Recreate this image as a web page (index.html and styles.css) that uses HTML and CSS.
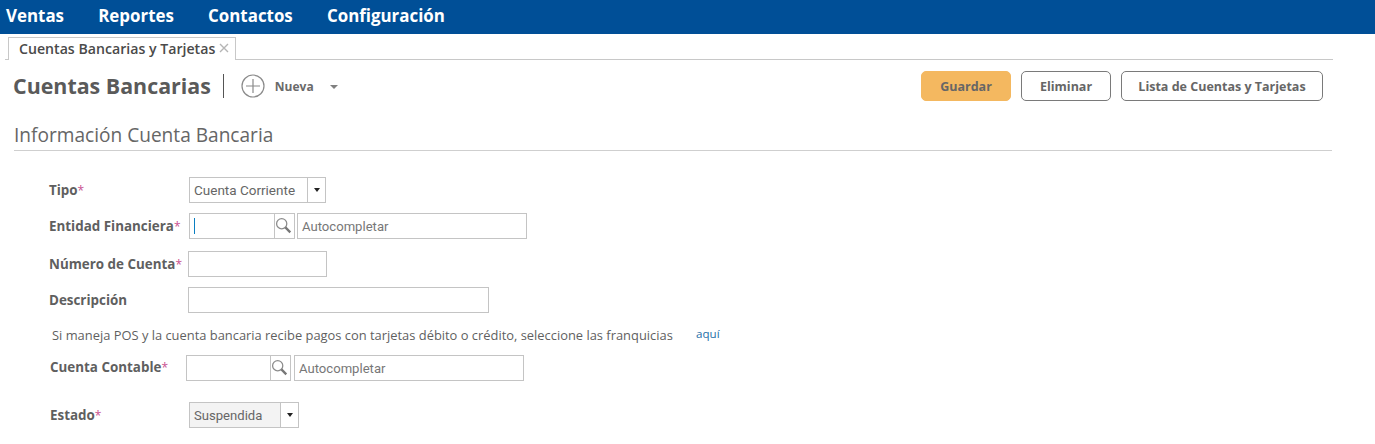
FILE: index.html
```html
<!DOCTYPE html>
<html lang="es">
<head>
<meta charset="utf-8">
<title>Cuentas Bancarias</title>
<link rel="stylesheet" href="styles.css">
</head>
<body>
<nav class="nav">
  <a class="nav-item">Ventas</a>
  <a class="nav-item">Reportes</a>
  <a class="nav-item">Contactos</a>
  <a class="nav-item">Configuración</a>
</nav>
<div class="tabs">
  <div class="tab"><span>Cuentas Bancarias y Tarjetas</span>
    <svg class="tab-x" width="10" height="10" viewBox="0 0 10 10"><path d="M1 1l8 8M9 1l-8 8" stroke="#b5b5b5" stroke-width="1.4" fill="none"/></svg>
  </div>
</div>
<header class="head">
  <h1 class="title">Cuentas Bancarias</h1>
  <div class="new">
    <svg class="plus" width="24" height="24" viewBox="0 0 24 24"><circle cx="12" cy="12" r="11" fill="none" stroke="#8a8a8a" stroke-width="1.2"/><path d="M12 5v14M5 12h14" stroke="#8a8a8a" stroke-width="1.2" fill="none"/></svg>
    <span class="new-label">Nueva</span>
    <span class="new-caret"></span>
  </div>
  <div class="actions">
    <button class="btn btn-primary">Guardar</button>
    <button class="btn">Eliminar</button>
    <button class="btn btn-wide">Lista de Cuentas y Tarjetas</button>
  </div>
</header>
<h2 class="section">Información Cuenta Bancaria</h2>
<form class="form">
  <div class="row row-tipo">
    <label class="lbl lbl-a">Tipo<em>*</em></label>
    <div class="select sel-tipo"><span class="sel-val">Cuenta Corriente</span><span class="sel-btn"><i></i></span></div>
  </div>
  <div class="row row-ent">
    <label class="lbl lbl-a">Entidad Financiera<em>*</em></label>
    <div class="lookup"><span class="lk-input"><span class="cursor"></span></span><span class="lk-btn"><svg width="17" height="17" viewBox="0 0 16 16"><circle cx="6.3" cy="6.3" r="4.8" fill="none" stroke="#8c8c8c" stroke-width="1.2"/><path d="M9.8 9.8l4.6 4.6" stroke="#777" stroke-width="2.2" fill="none"/></svg></span></div>
    <div class="auto">Autocompletar</div>
  </div>
  <div class="row row-num">
    <label class="lbl lbl-b">Número de Cuenta<em>*</em></label>
    <div class="input in-num"></div>
  </div>
  <div class="row row-desc">
    <label class="lbl lbl-b">Descripción</label>
    <div class="input in-desc"></div>
  </div>
  <p class="note"><span>Si maneja POS y la cuenta bancaria recibe pagos con tarjetas débito o crédito, seleccione las franquicias</span><a class="link">aquí</a></p>
  <div class="row row-cc">
    <label class="lbl lbl-c">Cuenta Contable<em>*</em></label>
    <div class="lookup lookup-cc"><span class="lk-input"></span><span class="lk-btn"><svg width="17" height="17" viewBox="0 0 16 16"><circle cx="6.3" cy="6.3" r="4.8" fill="none" stroke="#8c8c8c" stroke-width="1.2"/><path d="M9.8 9.8l4.6 4.6" stroke="#777" stroke-width="2.2" fill="none"/></svg></span></div>
    <div class="auto auto-cc">Autocompletar</div>
  </div>
  <div class="row row-est">
    <label class="lbl lbl-d">Estado<em>*</em></label>
    <div class="select sel-est"><span class="sel-val">Suspendida</span><span class="sel-btn"><i></i></span></div>
  </div>
</form>
</body>
</html>
```
FILE: styles.css
```css
* { box-sizing: border-box; }
html, body { margin: 0; padding: 0; }
body {
  width: 1375px;
  height: 444px;
  overflow: hidden;
  background: #fff;
  font-family: "DejaVu Sans", sans-serif;
  color: #5f5f5f;
}
.nav {
  height: 34px;
  background: #004f97;
  display: flex;
  align-items: center;
  gap: 34.2px;
  padding: 0 0 4px 6px;
}
.nav-item {
  color: #fff;
  font: 700 16.9px "Open Sans", sans-serif;
}
.tabs {
  height: 26px;
  margin: 0 42px 0 5px;
  padding: 3px 0 0 3px;
  border-bottom: 1px solid #c8c8c8;
}
.tab {
  width: 228px;
  height: 23px;
  background: #fff;
  border: 1px solid #c8c8c8;
  border-bottom: 0;
  display: flex;
  align-items: center;
  gap: 4px;
  padding: 0 0 2px 10px;
  font: 600 14.15px "Open Sans", sans-serif;
  color: #4a4a4a;
  white-space: nowrap;
}
.tab-x { flex: none; }
.head {
  height: 43px;
  margin: 0 52px 0 13px;
  display: flex;
  align-items: center;
  padding-top: 9px;
}
.title {
  margin: 0;
  padding-right: 12px;
  font: 700 21.4px "Open Sans", sans-serif;
  color: #5a5a5a;
  border-right: 1px solid #555;
  line-height: 24px;
  white-space: nowrap;
}
.new {
  display: flex;
  align-items: center;
  margin-left: 17px;
}
.new-label {
  margin-left: 10px;
  font: 700 12px "Open Sans", sans-serif;
  color: #6a6a6a;
}
.new-caret {
  margin-left: 16px;
  margin-top: 2px;
  border: 4.5px solid transparent;
  border-top: 4.5px solid #808080;
  border-bottom: 0;
}
.actions {
  margin-left: auto;
  display: flex;
  gap: 10px;
}
.btn {
  width: 90px;
  height: 30px;
  padding: 0;
  background: #fff;
  border: 1px solid #7a7a7a;
  border-radius: 5px;
  font: 700 12.5px "Open Sans", sans-serif;
  color: #666;
}
.btn-primary {
  background: #f4b860;
  border-color: #f4b860;
}
.btn-wide { width: 202px; }
.section {
  margin: 17px 43px 0 14px;
  height: 31px;
  padding-top: 3px;
  font: 400 19.1px "Open Sans", sans-serif;
  line-height: 24px;
  color: #666;
  border-bottom: 1px solid #cfcfcf;
}
.form { display: block; }
.row {
  display: flex;
  align-items: center;
  height: 26px;
}
.row-tipo { margin-top: 26px; }
.row-ent { margin-top: 10px; }
.row-num { margin-top: 12px; }
.row-desc { margin-top: 10px; }
.row-cc { margin-top: 10px; }
.row-est { margin-top: 21px; }
.lbl {
  flex: none;
  font: 700 13.4px "Open Sans", sans-serif;
  color: #5f5f5f;
  padding-bottom: 1px;
  white-space: nowrap;
}
.lbl em { font-style: normal; font-size: 12px; color: #c9508f; font-weight: 400; }
.lbl-a { margin-left: 49px; width: 140px; }
.lbl-b { margin-left: 49px; width: 139px; }
.lbl-c { margin-left: 50px; width: 136px; padding-bottom: 3px; }
.lbl-d { margin-left: 50px; width: 139px; }
.select {
  height: 26px;
  display: flex;
  border: 1px solid #c4c4c4;
}
.sel-tipo { width: 137px; }
.sel-est { width: 110px; }
.sel-val {
  flex: 1;
  padding-left: 4px;
  font: 400 13.5px/25px Roboto, sans-serif;
  color: #666;
  white-space: nowrap;
  overflow: hidden;
}
.sel-est .sel-val { background: #f3f3f3; font-size: 13.1px; }
.sel-btn {
  flex: none;
  width: 18px;
  border-left: 1px solid #c4c4c4;
  display: flex;
  align-items: center;
  justify-content: center;
}
.sel-btn i {
  border: 3.5px solid transparent;
  border-top: 4px solid #222;
  border-bottom: 0;
}
.lookup {
  height: 26px;
  display: flex;
  border: 1px solid #c4c4c4;
  width: 106px;
}
.lookup-cc { width: 105px; }
.lk-input {
  flex: 1;
  display: flex;
  align-items: center;
  padding-left: 4px;
}
.cursor {
  width: 1px;
  height: 16px;
  background: #0a7fc2;
}
.lk-btn {
  flex: none;
  width: 20px;
  border-left: 1px solid #c4c4c4;
  padding: 3px 0 0 0;
  line-height: 0;
}
.auto {
  margin-left: 2px;
  width: 230px;
  height: 26px;
  border: 1px solid #c4c4c4;
  padding-left: 4px;
  font: 400 13.1px/25px Roboto, sans-serif;
  color: #777;
}
.auto-cc { margin-left: 3px; }
.input {
  height: 26px;
  border: 1px solid #c4c4c4;
}
.in-num { width: 139px; }
.in-desc { width: 301px; }
.note {
  margin: 12px 0 0 52px;
  height: 20px;
  display: flex;
  font: 400 12.9px/20px "Open Sans", sans-serif;
  color: #5f5f5f;
  white-space: nowrap;
}
.link {
  position: absolute;
  left: 696px;
  margin-top: -1px;
  font-size: 11.6px;
  color: #1f6fa8;
}
```
